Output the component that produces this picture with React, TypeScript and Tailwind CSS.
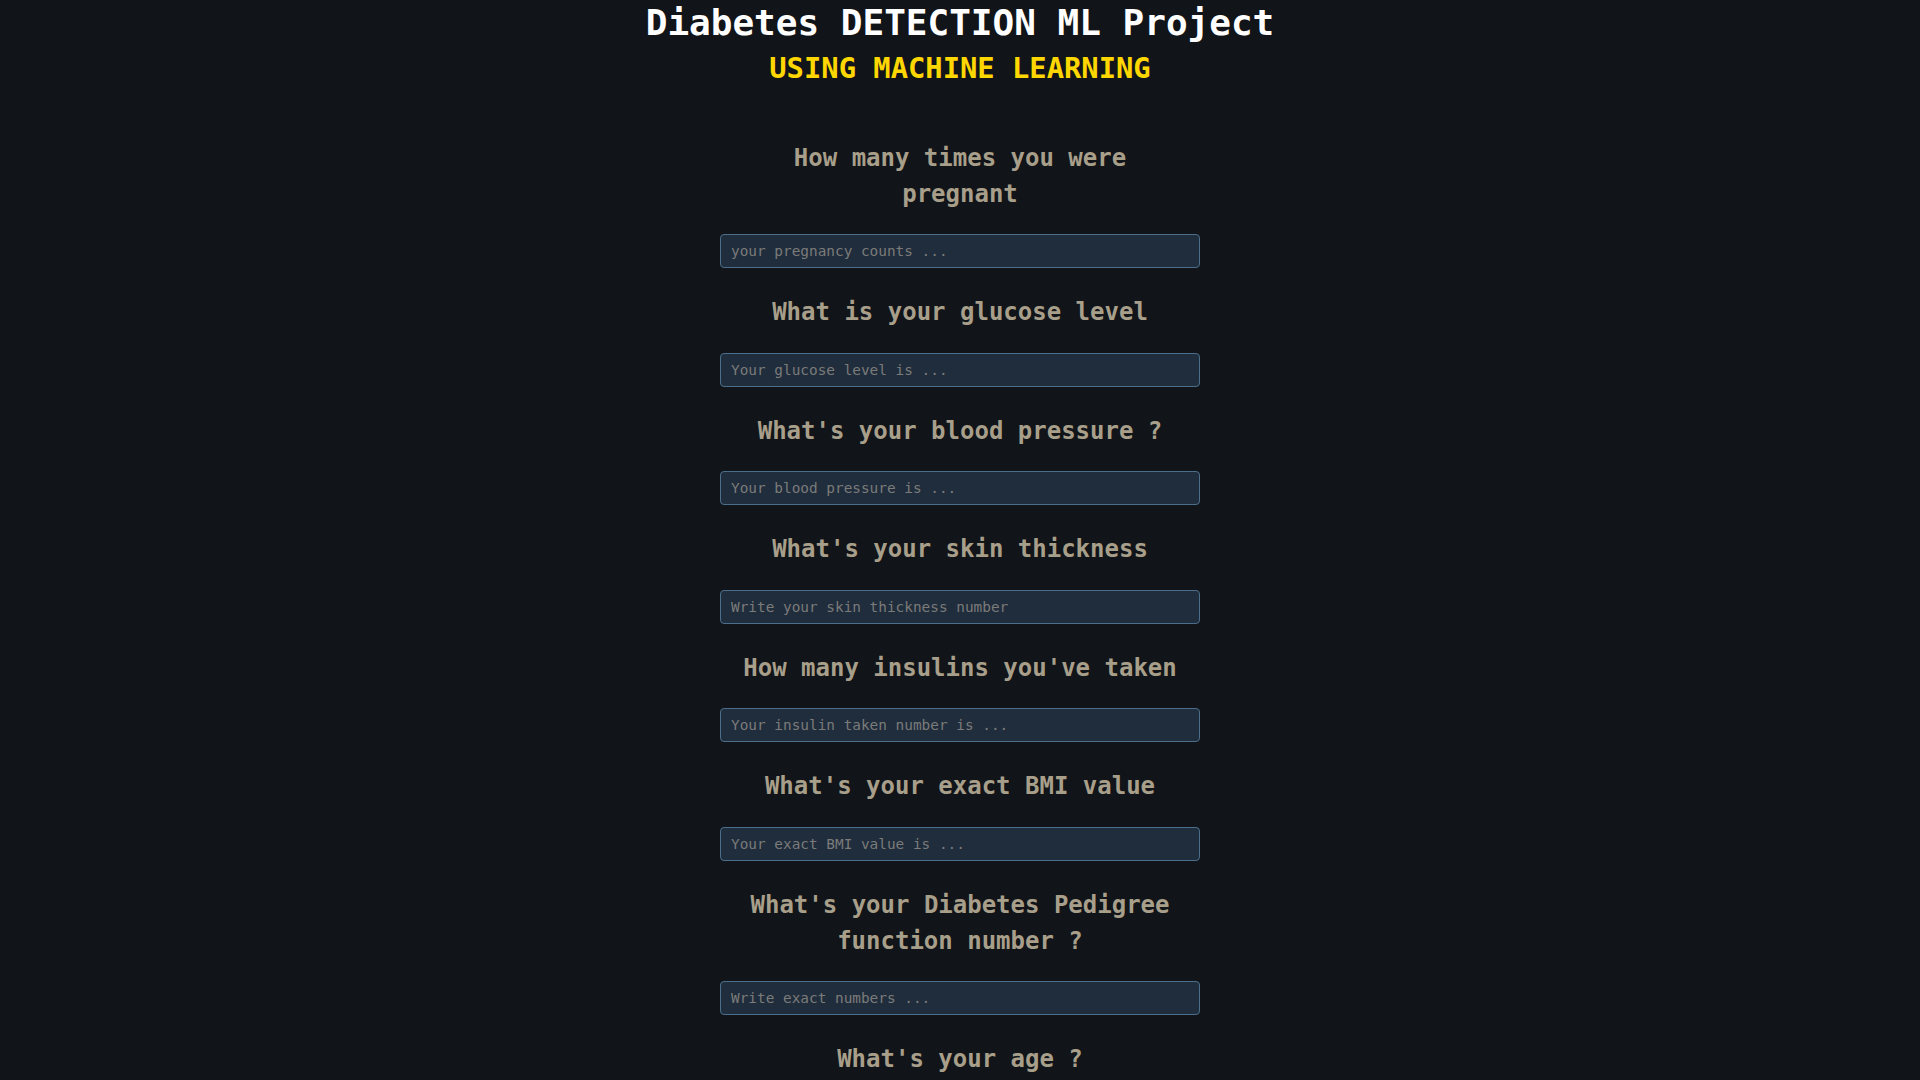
import React from "react";

const fields: { label: string; placeholder: string }[] = [
  { label: "How many times you were pregnant", placeholder: "your pregnancy counts ..." },
  { label: "What is your glucose level", placeholder: "Your glucose level is ..." },
  { label: "What's your blood pressure ?", placeholder: "Your blood pressure is ..." },
  { label: "What's your skin thickness", placeholder: "Write your skin thickness number" },
  { label: "How many insulins you've taken", placeholder: "Your insulin taken number is ..." },
  { label: "What's your exact BMI value", placeholder: "Your exact BMI value is ..." },
  { label: "What's your Diabetes Pedigree function number ?", placeholder: "Write exact numbers ..." },
  { label: "What's your age ?", placeholder: "Your age is ..." },
];

const mono = '"DejaVu Sans Mono", "Liberation Mono", monospace';

export default function App() {
  return (
    <div
      className="min-h-screen w-full bg-[#111418] flex flex-col items-center"
      style={{ fontFamily: mono }}
    >
      <h1 className="m-0 text-[36px] leading-[46px] font-bold text-white text-center">
        Diabetes DETECTION ML Project
      </h1>
      <h2 className="m-0 text-[28.8px] leading-[44px] font-bold text-[#ffd700] text-center">
        USING MACHINE LEARNING
      </h2>
      <form className="flex flex-col items-center pt-[23.5px] pb-10">
        {fields.map((f) => (
          <div key={f.label} className="flex flex-col items-center">
            <h3 className="mt-[26px] mb-[22.5px] max-w-[450px] text-center text-[24px] leading-[36px] font-bold text-[#a89f8b]">
              {f.label}
            </h3>
            <input
              type="text"
              placeholder={f.placeholder}
              className="w-[480px] h-[34px] px-[10px] rounded-[4px] border border-[#4b6f8a] bg-[#202d3d] text-[14.4px] text-[#c8c8c8] placeholder:text-[#7b7b79] outline-none"
              style={{ fontFamily: mono }}
            />
          </div>
        ))}
      </form>
    </div>
  );
}
